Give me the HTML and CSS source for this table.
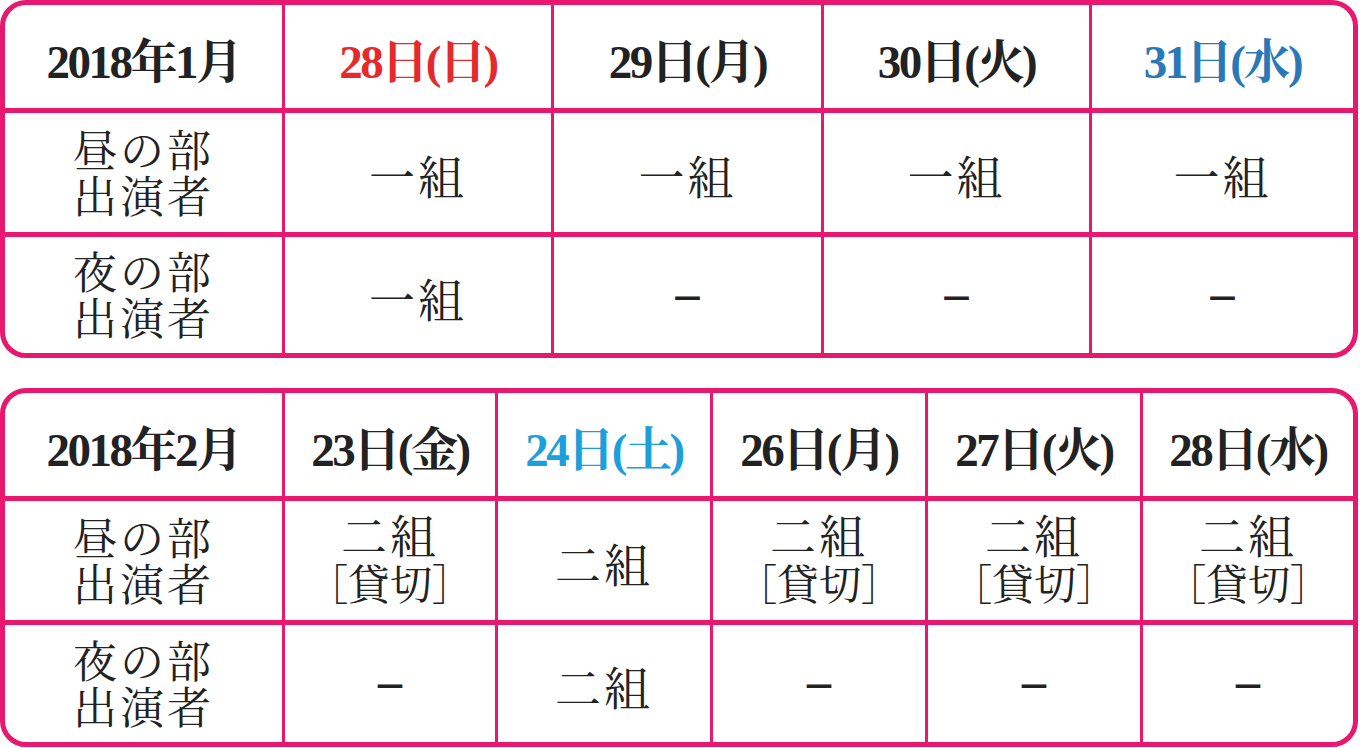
FILE: index.html
```html
<!DOCTYPE html>
<html lang="ja">
<head>
<meta charset="utf-8">
<title>出演スケジュール</title>
<link rel="stylesheet" href="styles.css">
</head>
<body>
<div class="page">
  <div class="sched sched-jan">
    <div class="cell head">2018年1月</div>
    <div class="cell head red">28日(日)</div>
    <div class="cell head">29日(月)</div>
    <div class="cell head">30日(火)</div>
    <div class="cell head blue">31日(水)</div>

    <div class="cell label"><div class="txt">昼の部<br>出演者</div></div>
    <div class="cell val">一組</div>
    <div class="cell val">一組</div>
    <div class="cell val">一組</div>
    <div class="cell val">一組</div>

    <div class="cell label"><div class="txt">夜の部<br>出演者</div></div>
    <div class="cell val">一組</div>
    <div class="cell dash">–</div>
    <div class="cell dash">–</div>
    <div class="cell dash">–</div>
  </div>

  <div class="sched sched-feb">
    <div class="cell head">2018年2月</div>
    <div class="cell head">23日(金)</div>
    <div class="cell head cyan">24日(土)</div>
    <div class="cell head">26日(月)</div>
    <div class="cell head">27日(火)</div>
    <div class="cell head">28日(水)</div>

    <div class="cell label"><div class="txt">昼の部<br>出演者</div></div>
    <div class="cell val two"><div class="txt">二組<br><span class="note">［貸切］</span></div></div>
    <div class="cell val">二組</div>
    <div class="cell val two"><div class="txt">二組<br><span class="note">［貸切］</span></div></div>
    <div class="cell val two"><div class="txt">二組<br><span class="note">［貸切］</span></div></div>
    <div class="cell val two"><div class="txt">二組<br><span class="note">［貸切］</span></div></div>

    <div class="cell label"><div class="txt">夜の部<br>出演者</div></div>
    <div class="cell dash">–</div>
    <div class="cell val">二組</div>
    <div class="cell dash">–</div>
    <div class="cell dash">–</div>
    <div class="cell dash">–</div>
  </div>
</div>
</body>
</html>
```

FILE: styles.css
```css
html, body {
  margin: 0;
  padding: 0;
  background: #ffffff;
}

body {
  font-family: "Liberation Serif", "Noto Serif CJK JP", "Noto Sans CJK JP", serif;
  color: #222222;
}

.page {
  width: 1360px;
  height: 748px;
  display: flex;
  flex-direction: column;
  gap: 30px;
}

.sched {
  width: 1358px;
  box-sizing: border-box;
  border: 5px solid #e8186e;
  border-radius: 26px;
  background: #e8186e;
  overflow: hidden;
  display: grid;
  row-gap: 5px;
  column-gap: 3px;
}

.sched-jan {
  height: 358px;
  grid-template-columns: 277px 266px 267px 265px 1fr;
  grid-template-rows: 103px 119px 1fr;
}

.sched-feb {
  height: 359px;
  grid-template-columns: 277px 210px 212px 212px 212px 1fr;
  grid-template-rows: 103px 119px 1fr;
}

.cell {
  background: #fff;
  display: flex;
  align-items: center;
  justify-content: center;
  text-align: center;
  box-sizing: border-box;
}

.txt {
  text-align: center;
}

.head {
  font-size: 47px;
  font-weight: bold;
  letter-spacing: -2.5px;
  padding-top: 2px;
}

.red { color: #e42a2c; }
.blue { color: #2a78b8; }
.cyan { color: #1ca0dc; }

.label {
  font-size: 44px;
  line-height: 46px;
  letter-spacing: 3px;
  padding-top: 6px;
}

.val {
  font-size: 46px;
  line-height: 47px;
  letter-spacing: 3px;
  padding-top: 12px;
}

.val.two {
  padding-top: 2px;
}

.note {
  font-size: 42px;
  letter-spacing: 0;
  font-feature-settings: "palt";
}

.dash {
  font-weight: bold;
  font-size: 48px;
  padding-bottom: 4px;
}
```
